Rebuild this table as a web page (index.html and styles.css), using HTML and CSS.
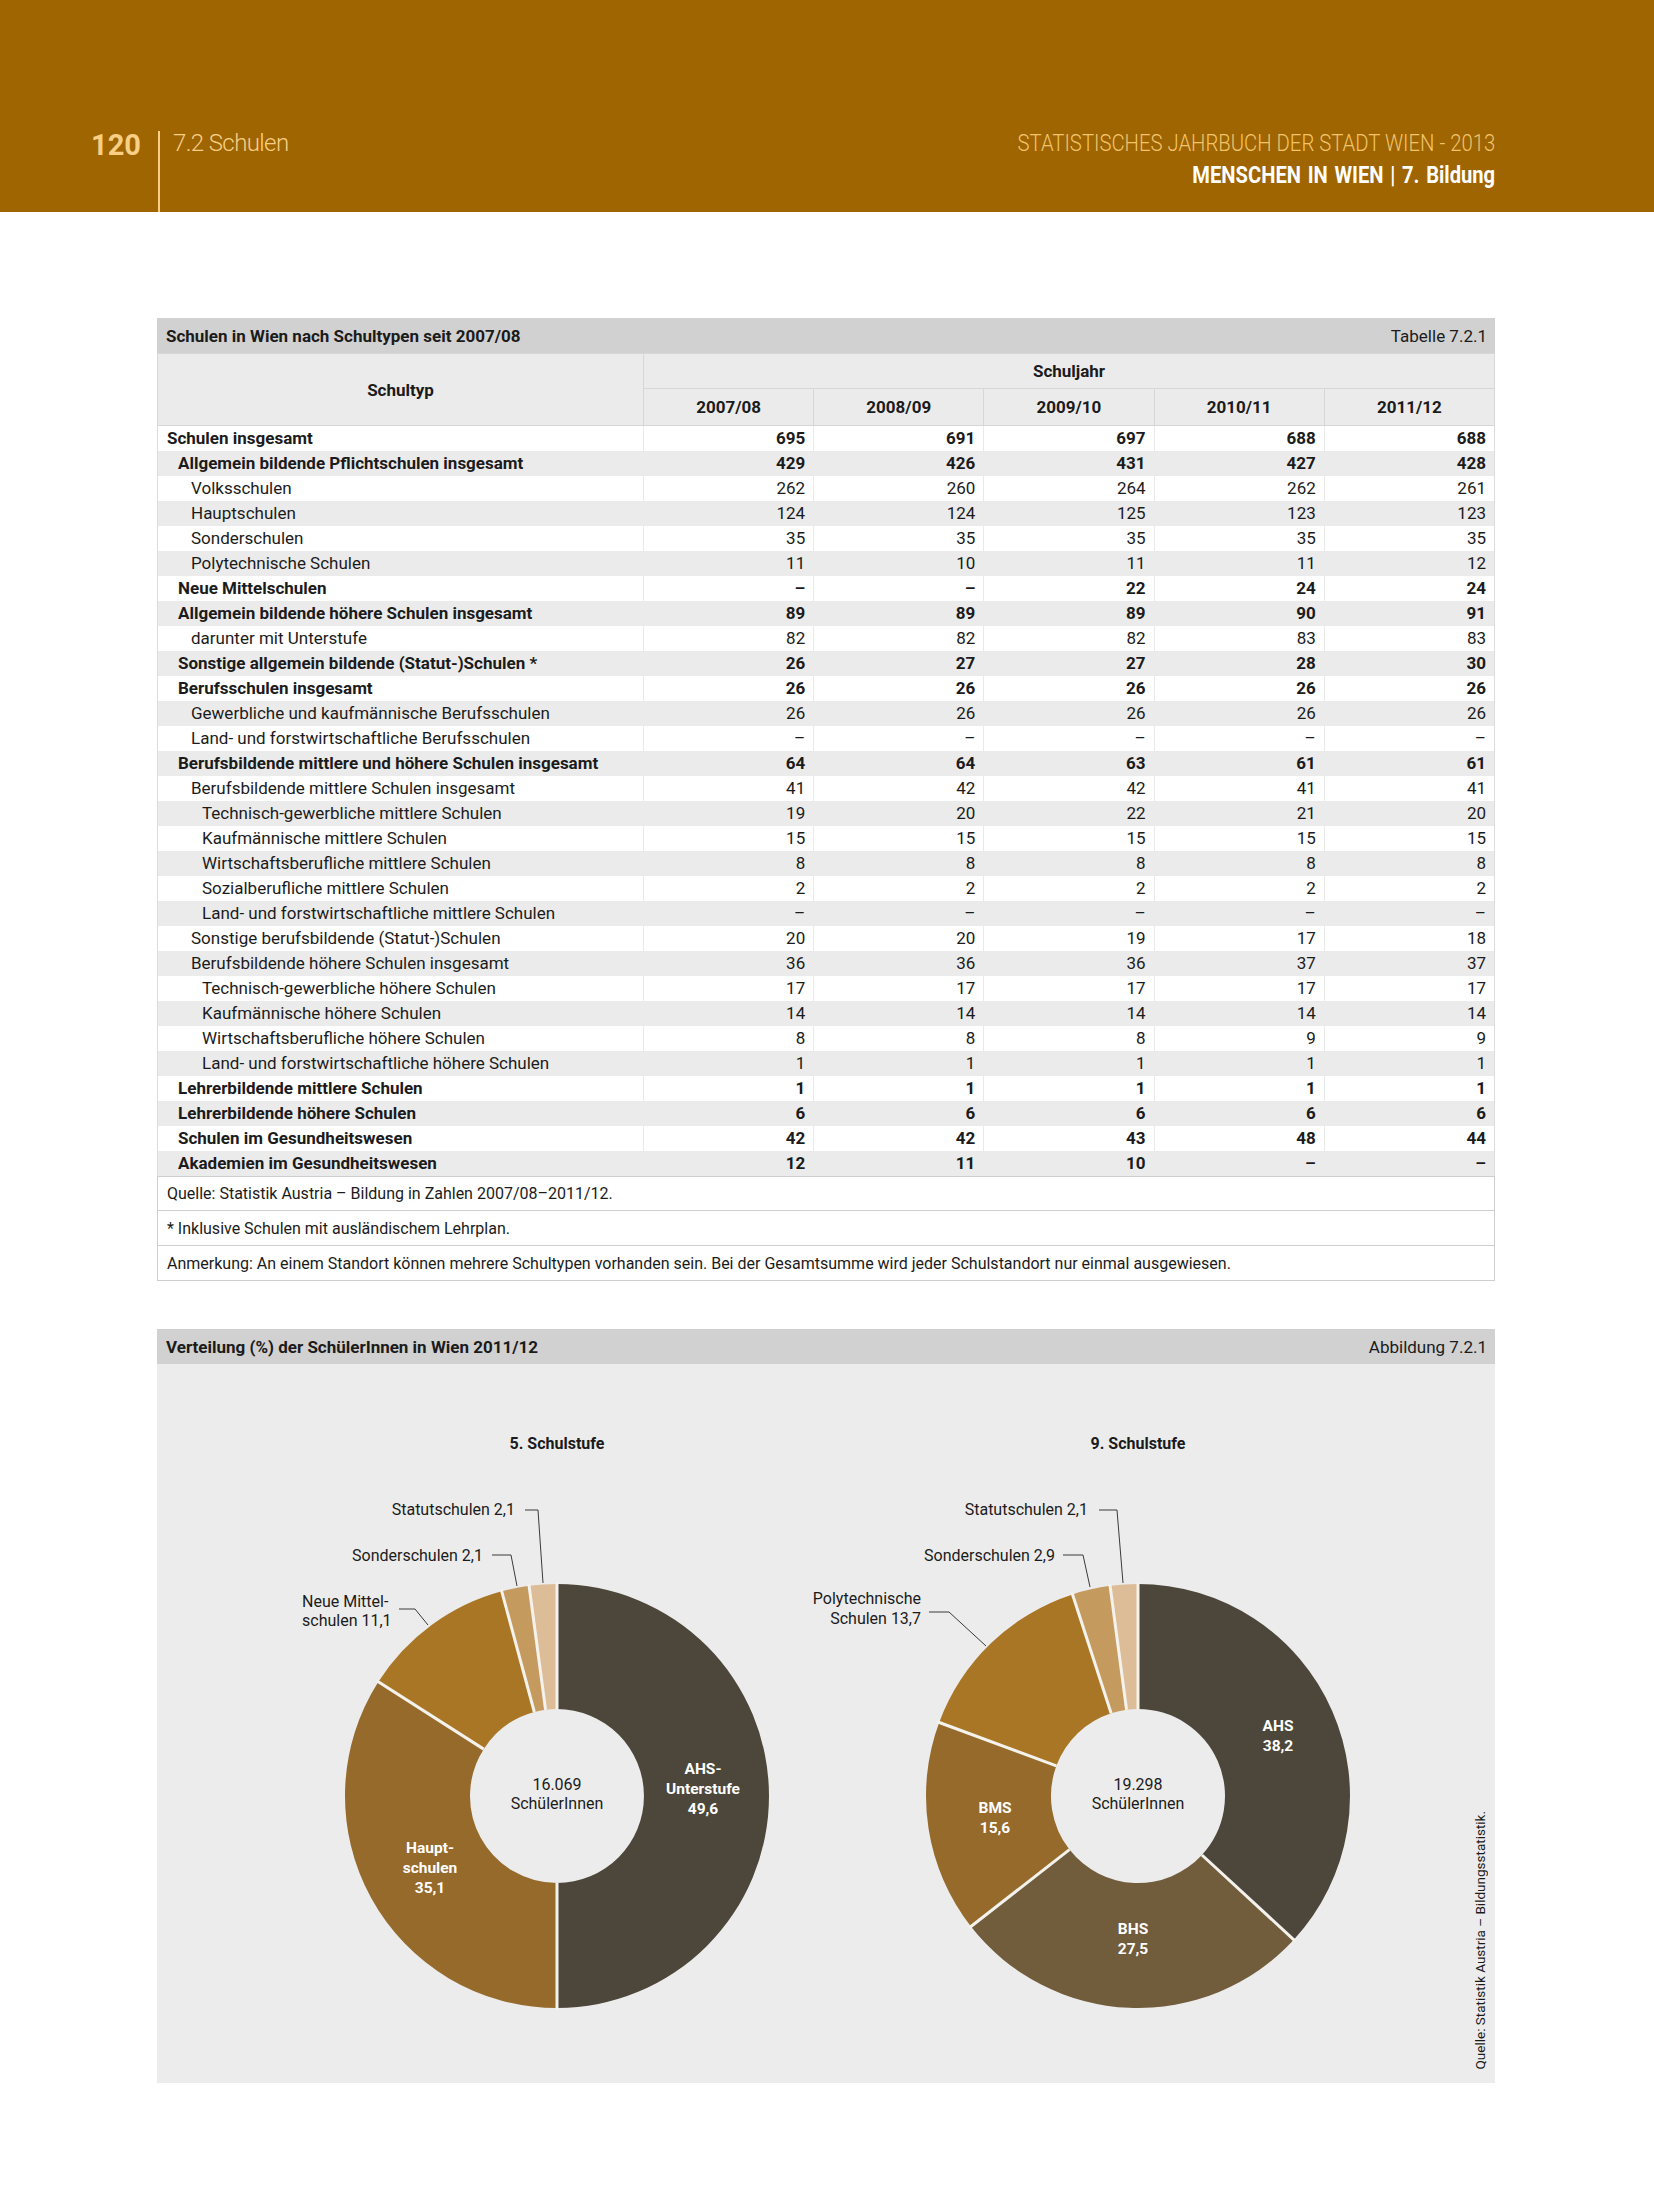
FILE: index.html
```html
<!DOCTYPE html>
<html lang="de">
<head>
<meta charset="utf-8">
<title>Statistisches Jahrbuch der Stadt Wien 2013 – 7.2 Schulen</title>
<link rel="stylesheet" href="styles.css">
</head>
<body>
<header class="page-head">
  <div class="head-left">
    <span class="page-num">120</span>
    <span class="chapter">7.2 Schulen</span>
  </div>
  <div class="head-right">
    <div class="book-title">STATISTISCHES JAHRBUCH DER STADT WIEN - 2013</div>
    <div class="section-title">MENSCHEN IN WIEN | 7. Bildung</div>
  </div>
</header>

<main class="content">
  <section class="table-block">
    <div class="caption-bar"><span class="cap-title">Schulen in Wien nach Schultypen seit 2007/08</span><span class="cap-num">Tabelle 7.2.1</span></div>
    <table class="data">
      <colgroup><col class="c-type"><col><col><col><col><col></colgroup>
      <thead>
        <tr class="h1"><th rowspan="2" class="th-type">Schultyp</th><th colspan="5">Schuljahr</th></tr>
        <tr class="h2"><th>2007/08</th><th>2008/09</th><th>2009/10</th><th>2010/11</th><th>2011/12</th></tr>
      </thead>
      <tbody>
        <tr class="b"><td class="l0">Schulen insgesamt</td><td>695</td><td>691</td><td>697</td><td>688</td><td>688</td></tr>
        <tr class="alt b"><td class="l1">Allgemein bildende Pflichtschulen insgesamt</td><td>429</td><td>426</td><td>431</td><td>427</td><td>428</td></tr>
        <tr><td class="l2">Volksschulen</td><td>262</td><td>260</td><td>264</td><td>262</td><td>261</td></tr>
        <tr class="alt"><td class="l2">Hauptschulen</td><td>124</td><td>124</td><td>125</td><td>123</td><td>123</td></tr>
        <tr><td class="l2">Sonderschulen</td><td>35</td><td>35</td><td>35</td><td>35</td><td>35</td></tr>
        <tr class="alt"><td class="l2">Polytechnische Schulen</td><td>11</td><td>10</td><td>11</td><td>11</td><td>12</td></tr>
        <tr class="b"><td class="l1">Neue Mittelschulen</td><td>–</td><td>–</td><td>22</td><td>24</td><td>24</td></tr>
        <tr class="alt b"><td class="l1">Allgemein bildende höhere Schulen insgesamt</td><td>89</td><td>89</td><td>89</td><td>90</td><td>91</td></tr>
        <tr><td class="l2">darunter mit Unterstufe</td><td>82</td><td>82</td><td>82</td><td>83</td><td>83</td></tr>
        <tr class="alt b"><td class="l1">Sonstige allgemein bildende (Statut-)Schulen *</td><td>26</td><td>27</td><td>27</td><td>28</td><td>30</td></tr>
        <tr class="b"><td class="l1">Berufsschulen insgesamt</td><td>26</td><td>26</td><td>26</td><td>26</td><td>26</td></tr>
        <tr class="alt"><td class="l2">Gewerbliche und kaufmännische Berufsschulen</td><td>26</td><td>26</td><td>26</td><td>26</td><td>26</td></tr>
        <tr><td class="l2">Land- und forstwirtschaftliche Berufsschulen</td><td>–</td><td>–</td><td>–</td><td>–</td><td>–</td></tr>
        <tr class="alt b"><td class="l1">Berufsbildende mittlere und höhere Schulen insgesamt</td><td>64</td><td>64</td><td>63</td><td>61</td><td>61</td></tr>
        <tr><td class="l2">Berufsbildende mittlere Schulen insgesamt</td><td>41</td><td>42</td><td>42</td><td>41</td><td>41</td></tr>
        <tr class="alt"><td class="l3">Technisch-gewerbliche mittlere Schulen</td><td>19</td><td>20</td><td>22</td><td>21</td><td>20</td></tr>
        <tr><td class="l3">Kaufmännische mittlere Schulen</td><td>15</td><td>15</td><td>15</td><td>15</td><td>15</td></tr>
        <tr class="alt"><td class="l3">Wirtschaftsberufliche mittlere Schulen</td><td>8</td><td>8</td><td>8</td><td>8</td><td>8</td></tr>
        <tr><td class="l3">Sozialberufliche mittlere Schulen</td><td>2</td><td>2</td><td>2</td><td>2</td><td>2</td></tr>
        <tr class="alt"><td class="l3">Land- und forstwirtschaftliche mittlere Schulen</td><td>–</td><td>–</td><td>–</td><td>–</td><td>–</td></tr>
        <tr><td class="l2">Sonstige berufsbildende (Statut-)Schulen</td><td>20</td><td>20</td><td>19</td><td>17</td><td>18</td></tr>
        <tr class="alt"><td class="l2">Berufsbildende höhere Schulen insgesamt</td><td>36</td><td>36</td><td>36</td><td>37</td><td>37</td></tr>
        <tr><td class="l3">Technisch-gewerbliche höhere Schulen</td><td>17</td><td>17</td><td>17</td><td>17</td><td>17</td></tr>
        <tr class="alt"><td class="l3">Kaufmännische höhere Schulen</td><td>14</td><td>14</td><td>14</td><td>14</td><td>14</td></tr>
        <tr><td class="l3">Wirtschaftsberufliche höhere Schulen</td><td>8</td><td>8</td><td>8</td><td>9</td><td>9</td></tr>
        <tr class="alt"><td class="l3">Land- und forstwirtschaftliche höhere Schulen</td><td>1</td><td>1</td><td>1</td><td>1</td><td>1</td></tr>
        <tr class="b"><td class="l1">Lehrerbildende mittlere Schulen</td><td>1</td><td>1</td><td>1</td><td>1</td><td>1</td></tr>
        <tr class="alt b"><td class="l1">Lehrerbildende höhere Schulen</td><td>6</td><td>6</td><td>6</td><td>6</td><td>6</td></tr>
        <tr class="b"><td class="l1">Schulen im Gesundheitswesen</td><td>42</td><td>42</td><td>43</td><td>48</td><td>44</td></tr>
        <tr class="alt b"><td class="l1">Akademien im Gesundheitswesen</td><td>12</td><td>11</td><td>10</td><td>–</td><td>–</td></tr>
      </tbody>
    </table>
    <div class="note first">Quelle: Statistik Austria – Bildung in Zahlen 2007/08–2011/12.</div>
    <div class="note">* Inklusive Schulen mit ausländischem Lehrplan.</div>
    <div class="note">Anmerkung: An einem Standort können mehrere Schultypen vorhanden sein. Bei der Gesamtsumme wird jeder Schulstandort nur einmal ausgewiesen.</div>
  </section>

  <section class="figure-block">
    <div class="caption-bar"><span class="cap-title">Verteilung (%) der SchülerInnen in Wien 2011/12</span><span class="cap-num">Abbildung 7.2.1</span></div>
    <div class="figure-body">
      <svg class="donut" viewBox="0 0 581 719" width="581" height="719">
        <text class="ttl" x="290" y="85">5. Schulstufe</text>
        <path class="s-ahs" d="M290,220 A212,212 0 0 1 290,644 L290,519 A87,87 0 0 0 290,345 Z"/>
        <path class="s-hs" d="M290,644 A212,212 0 0 1 111.40,317.78 L216.71,385.13 A87,87 0 0 0 290,519 Z"/>
        <path class="s-nms" d="M111.40,317.78 A212,212 0 0 1 234.70,227.34 L267.31,348.01 A87,87 0 0 0 216.71,385.13 Z"/>
        <path class="s-son" d="M234.70,227.34 A212,212 0 0 1 262.11,221.84 L278.55,345.76 A87,87 0 0 0 267.31,348.01 Z"/>
        <path class="s-sta" d="M262.11,221.84 A212,212 0 0 1 290,220 L290,345 A87,87 0 0 0 278.55,345.76 Z"/>
        <g class="sep">
          <line x1="290" y1="345" x2="290" y2="218"/>
          <line x1="290" y1="519" x2="290" y2="646"/>
          <line x1="216.71" y1="385.13" x2="109.72" y2="316.70"/>
          <line x1="267.31" y1="348.01" x2="234.2" y2="225.4"/>
          <line x1="278.55" y1="345.76" x2="261.8" y2="219.8"/>
        </g>
        <polyline class="lead" points="258,146 271,146 276,219"/>
        <polyline class="lead" points="225,191 244,191 250,222"/>
        <polyline class="lead" points="132,245 148,245 161,261"/>
        <text class="lbl end" x="248" y="151">Statutschulen 2,1</text>
        <text class="lbl end" x="216" y="197">Sonderschulen 2,1</text>
        <text class="lbl" x="35" y="243">Neue Mittel-<tspan x="35" dy="19">schulen 11,1</tspan></text>
        <text class="lbl-in" x="436" y="410">AHS-<tspan x="436" dy="20">Unterstufe</tspan><tspan x="436" dy="20">49,6</tspan></text>
        <text class="lbl-in" x="163" y="489">Haupt-<tspan x="163" dy="20">schulen</tspan><tspan x="163" dy="20">35,1</tspan></text>
        <text class="ctr" x="290" y="426">16.069<tspan x="290" dy="19">SchülerInnen</tspan></text>
      </svg>
      <svg class="donut" viewBox="0 0 581 719" width="581" height="719">
        <text class="ttl" x="290" y="85">9. Schulstufe</text>
        <path class="s-ahs" d="M290,220 A212,212 0 0 1 445.80,575.77 L353.94,491.00 A87,87 0 0 0 290,345 Z"/>
        <path class="s-bhs" d="M445.80,575.77 A212,212 0 0 1 122.94,562.52 L221.44,485.56 A87,87 0 0 0 353.94,491.00 Z"/>
        <path class="s-hs" d="M122.94,562.52 A212,212 0 0 1 91.17,358.45 L208.40,401.82 A87,87 0 0 0 221.44,485.56 Z"/>
        <path class="s-nms" d="M91.17,358.45 A212,212 0 0 1 224.49,230.38 L263.12,349.26 A87,87 0 0 0 208.40,401.82 Z"/>
        <path class="s-son" d="M224.49,230.38 A212,212 0 0 1 262.11,221.84 L278.55,345.76 A87,87 0 0 0 263.12,349.26 Z"/>
        <path class="s-sta" d="M262.11,221.84 A212,212 0 0 1 290,220 L290,345 A87,87 0 0 0 278.55,345.76 Z"/>
        <g class="sep">
          <line x1="290" y1="345" x2="290" y2="218"/>
          <line x1="353.94" y1="491.00" x2="447.27" y2="577.13"/>
          <line x1="221.44" y1="485.56" x2="121.37" y2="563.75"/>
          <line x1="208.40" y1="401.82" x2="89.29" y2="357.75"/>
          <line x1="263.12" y1="349.26" x2="223.9" y2="228.5"/>
          <line x1="278.55" y1="345.76" x2="261.8" y2="219.8"/>
        </g>
        <polyline class="lead" points="251,146 269,146 275,219"/>
        <polyline class="lead" points="215,191 235,191 242,223"/>
        <polyline class="lead" points="81,248 101,248 138,282"/>
        <text class="lbl end" x="240" y="151">Statutschulen 2,1</text>
        <text class="lbl end" x="207" y="197">Sonderschulen 2,9</text>
        <text class="lbl end" x="73" y="240">Polytechnische<tspan x="73" dy="20">Schulen 13,7</tspan></text>
        <text class="lbl-in" x="430" y="367">AHS<tspan x="430" dy="20">38,2</tspan></text>
        <text class="lbl-in" x="285" y="570">BHS<tspan x="285" dy="20">27,5</tspan></text>
        <text class="lbl-in" x="147" y="449">BMS<tspan x="147" dy="20">15,6</tspan></text>
        <text class="ctr" x="290" y="426">19.298<tspan x="290" dy="19">SchülerInnen</tspan></text>
      </svg>
      <div class="fig-source">Quelle: Statistik Austria – Bildungsstatistik.</div>
    </div>
  </section>
</main>
</body>
</html>
```

FILE: styles.css
```css
* { box-sizing: border-box; }

html, body {
  margin: 0;
  padding: 0;
}

body {
  width: 1654px;
  min-height: 2205px;
  background: #ffffff;
  font-family: Roboto, "Liberation Sans", Arial, sans-serif;
  color: #1b1b1b;
}

/* ---------- page header ---------- */
.page-head {
  height: 212px;
  background: #9e6500;
  display: flex;
  justify-content: space-between;
  padding: 0 159px 0 91px;
}

.head-left {
  display: flex;
  align-items: flex-start;
  padding-top: 131px;
}

.page-num {
  font-size: 29px;
  font-weight: 700;
  line-height: 1;
  color: #f9cf86;
}

.chapter {
  margin-left: 17px;
  height: 81px;
  border-left: 2px solid #f9cf86;
  padding-left: 13px;
  font-size: 24px;
  font-weight: 300;
  line-height: 1;
  color: #f7cf88;
  letter-spacing: -0.6px;
}

.head-right {
  padding-top: 131px;
  text-align: right;
}

.book-title {
  font-size: 24px;
  font-weight: 300;
  line-height: 1;
  color: #f3c46c;
  white-space: nowrap;
  transform: scaleX(0.845);
  transform-origin: right center;
}

.section-title {
  margin-top: 8px;
  font-size: 24px;
  font-weight: 700;
  line-height: 1;
  color: #ffffff;
  white-space: nowrap;
  word-spacing: 2px;
  transform: scaleX(0.84);
  transform-origin: right center;
}

/* ---------- content ---------- */
.content {
  padding: 106px 0 0 157px;
}

.table-block,
.figure-block {
  width: 1338px;
}

.caption-bar {
  height: 35px;
  background: #d1d1d1;
  display: flex;
  justify-content: space-between;
  align-items: center;
  padding: 0 8px 0 9px;
  font-size: 17px;
}

.cap-title {
  font-weight: 700;
}

/* ---------- table ---------- */
table.data {
  width: 100%;
  border-collapse: collapse;
  table-layout: fixed;
  font-size: 17px;
}

.c-type {
  width: 486px;
}

thead th {
  background: #ebebeb;
  font-weight: 700;
  font-size: 17px;
  border: 1px solid #d7d7d7;
  padding: 0;
  text-align: center;
}

thead tr.h1 th {
  height: 35px;
}

thead tr.h2 th {
  height: 37px;
}

tbody td {
  padding: 0 8px;
  line-height: 25px;
  text-align: right;
  white-space: nowrap;
  border-left: 1px solid #e9e9e9;
}

tbody td:first-child {
  text-align: left;
  border-left: 1px solid #dcdcdc;
}

tbody td:last-child {
  border-right: 1px solid #dcdcdc;
}

tbody tr.alt td {
  background: #ebebeb;
  border-left-color: #ebebeb;
}

tbody tr.alt td:first-child {
  border-left-color: #dcdcdc;
}

tbody tr.b td {
  font-weight: 700;
}

td.l0 { padding-left: 9px; }
td.l1 { padding-left: 20px; }
td.l2 { padding-left: 33px; }
td.l3 { padding-left: 44px; }

.note {
  height: 35px;
  display: flex;
  align-items: center;
  padding-left: 9px;
  font-size: 16px;
  border: 1px solid #cfcfcf;
  border-top: none;
}

.note.first {
  border-top: 1px solid #cfcfcf;
}

/* ---------- figure ---------- */
.figure-block {
  margin-top: 48px;
}

.figure-body {
  height: 719px;
  background: #ececec;
  display: flex;
  padding-left: 110px;
}

svg.donut {
  flex: none;
  display: block;
  width: 581px;
  height: 719px;
  overflow: visible;
}

.s-ahs { fill: #4d473b; }
.s-bhs { fill: #715c3c; }
.s-hs  { fill: #956a2b; }
.s-nms { fill: #a97625; }
.s-son { fill: #c49a5e; }
.s-sta { fill: #dcbd98; }

.sep line {
  stroke: #f4f2ec;
  stroke-width: 3;
}

.lead {
  fill: none;
  stroke: #3a3a3a;
  stroke-width: 1;
}

.ttl {
  font-size: 16px;
  font-weight: 700;
  text-anchor: middle;
  fill: #1b1b1b;
}

.lbl {
  font-size: 16px;
  fill: #1b1b1b;
}

.lbl.end {
  text-anchor: end;
}

.lbl-in {
  font-size: 15.5px;
  font-weight: 700;
  fill: #ffffff;
  text-anchor: middle;
}

.ctr {
  font-size: 16px;
  fill: #1b1b1b;
  text-anchor: middle;
}

.fig-source {
  margin: 0 6px 14px auto;
  align-self: flex-end;
  writing-mode: vertical-rl;
  transform: rotate(180deg);
  font-size: 13.5px;
  line-height: 18px;
  white-space: nowrap;
}
```
